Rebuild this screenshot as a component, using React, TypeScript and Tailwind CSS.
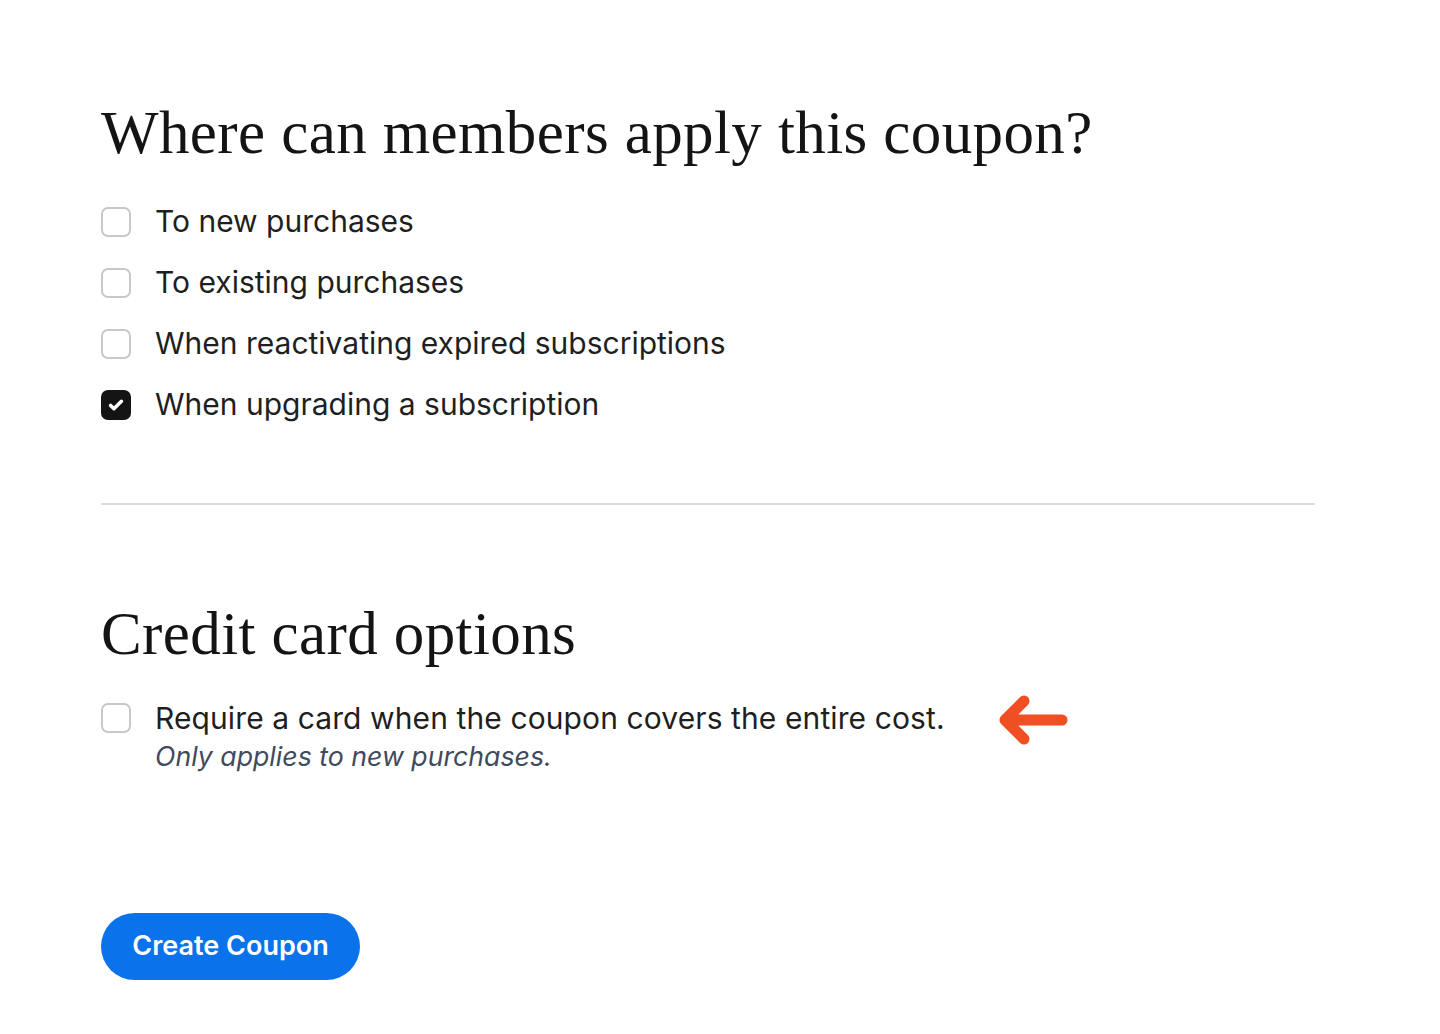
import React from "react";

function Box({ checked }: { checked?: boolean }) {
  if (checked) {
    return (
      <div className="flex h-[30px] w-[30px] shrink-0 items-center justify-center rounded-[7px] bg-[#141414]">
        <svg width="20" height="20" viewBox="0 0 24 24" fill="none">
          <path d="M5.5 12.5l4 4L18.5 7.5" stroke="white" strokeWidth="4.2" strokeLinecap="round" strokeLinejoin="round" />
        </svg>
      </div>
    );
  }
  return <div className="h-[30px] w-[30px] shrink-0 rounded-[7px] border-2 border-[#c8c8c8] bg-white" />;
}

function Row({ label, checked }: { label: string; checked?: boolean }) {
  return (
    <div className="flex h-[61px] items-center gap-[24px]">
      <Box checked={checked} />
      <span className="text-[30px] text-[#1f1f1f]">{label}</span>
    </div>
  );
}

const serif = { fontFamily: "'Liberation Serif', 'DejaVu Serif', serif" };

export default function App() {
  return (
    <div className="min-h-[1034px] bg-white pl-[101px] pr-[125px] pt-[98px]" style={{ fontFamily: "Inter, 'Liberation Sans', sans-serif" }}>
      <h1 className="text-[61px] leading-[70px] tracking-[0.4px] text-[#141414]" style={serif}>
        Where can members apply this coupon?
      </h1>
      <div className="mt-[23px] flex flex-col">
        <Row label="To new purchases" />
        <Row label="To existing purchases" />
        <Row label="When reactivating expired subscriptions" />
        <Row label="When upgrading a subscription" checked />
      </div>
      <div className="mt-[68px] h-[2px] bg-[#dcdcdc]" />
      <h2 className="mt-[94px] text-[61px] leading-[70px] tracking-[0.4px] text-[#141414]" style={serif}>
        Credit card options
      </h2>
      <div className="mt-[31px] flex items-start gap-[24px]">
        <div className="pt-[3px]">
          <Box />
        </div>
        <div className="flex flex-col">
          <span className="text-[30px] leading-[36px] tracking-[0.1px] text-[#1f1f1f]">Require a card when the coupon covers the entire cost.</span>
          <span className="mt-[2px] text-[26.7px] italic leading-[36px] text-[#3f4a5c]">Only applies to new purchases.</span>
        </div>
        <svg className="ml-[27px] mt-[-7px]" width="74" height="54" viewBox="0 0 74 54" fill="none">
          <path d="M66 27H11M28 8L9 27l19 19" stroke="#f04e23" strokeWidth="11" strokeLinecap="round" strokeLinejoin="round" />
        </svg>
      </div>
      <button className="mt-[139px] flex h-[67px] w-[259px] items-center justify-center rounded-full bg-[#0a72ea] text-[27px] font-semibold text-white">
        Create Coupon
      </button>
    </div>
  );
}
